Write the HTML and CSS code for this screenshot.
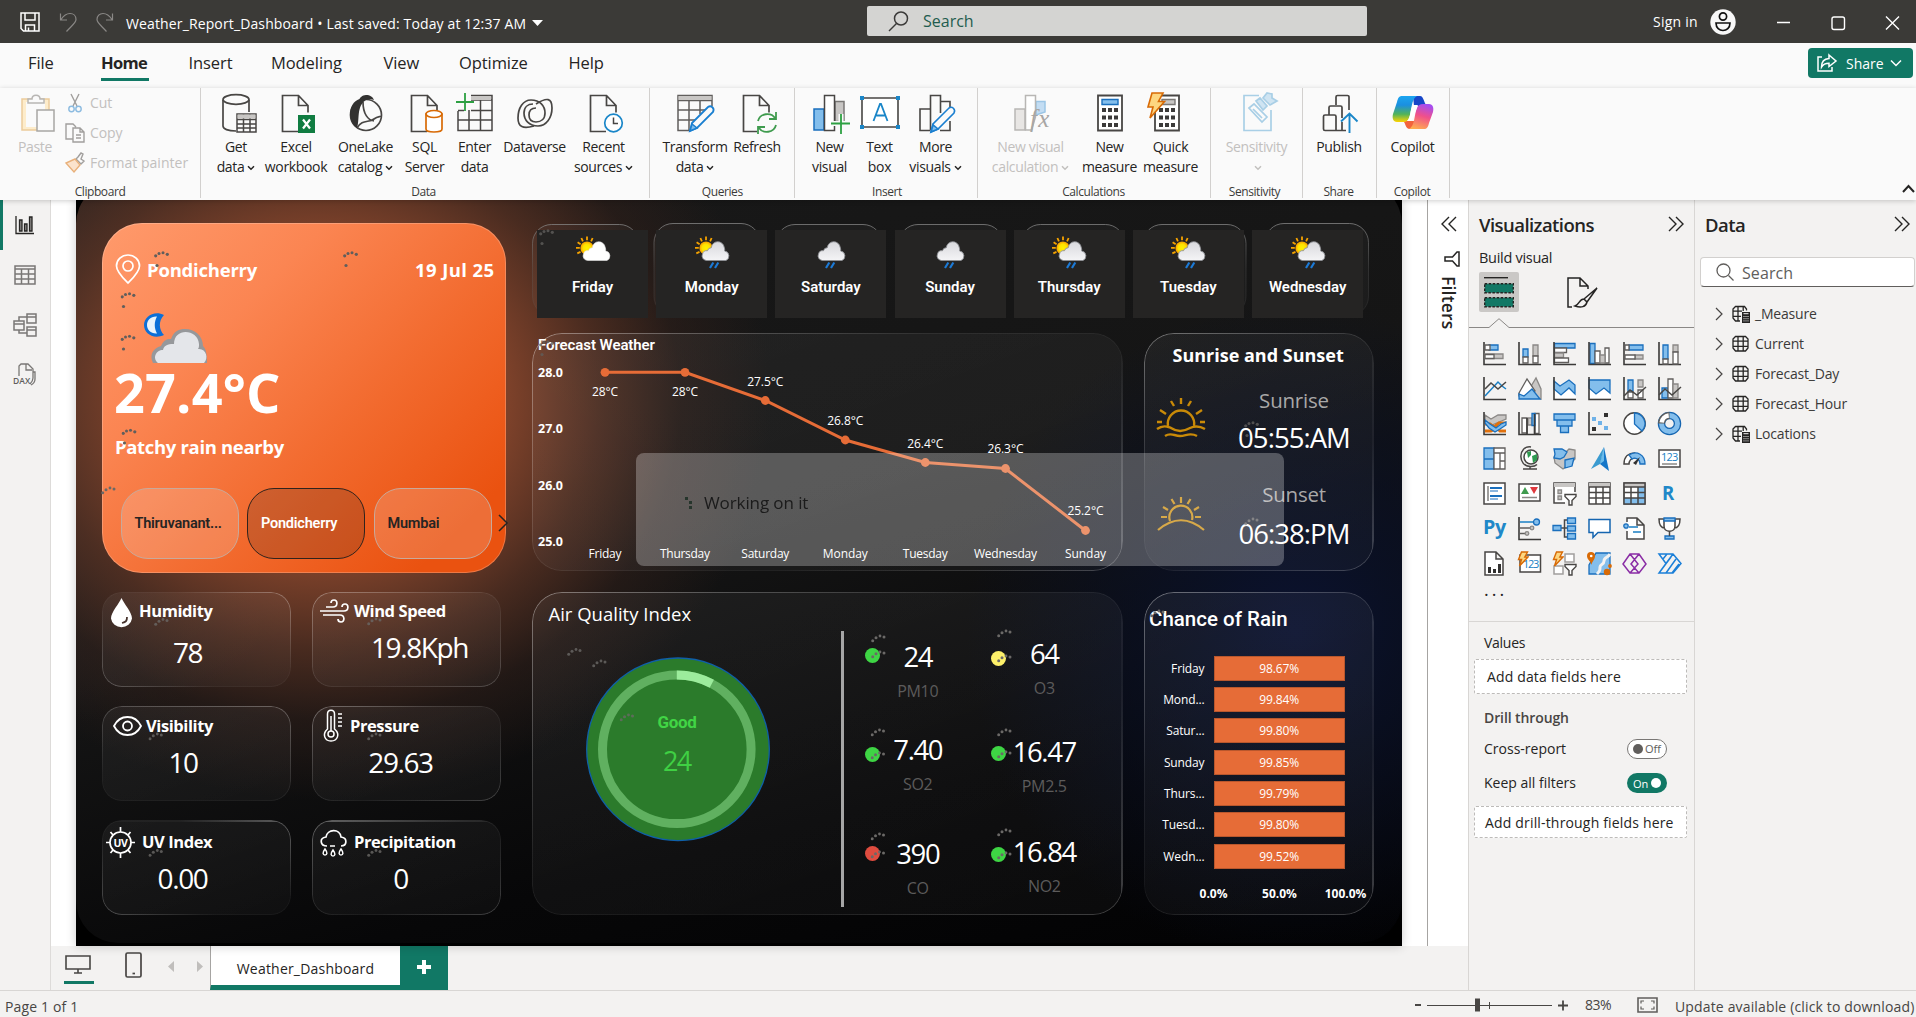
FILE: index.html
```html
<!DOCTYPE html>
<html lang="en">
<head>
<meta charset="utf-8">
<title>Weather_Report_Dashboard</title>
<link rel="stylesheet" href="styles.css">
</head>
<body>
<svg class="sprite" width="0" height="0" aria-hidden="true">
  <defs>
    <linearGradient id="cloudFill" x1="0" y1="0" x2="0" y2="1"><stop offset="0" stop-color="#d9d9dd"/><stop offset="1" stop-color="#f4f4f6"/></linearGradient>
    <radialGradient id="sunFill"><stop offset="0" stop-color="#fff200"/><stop offset=".6" stop-color="#ffe000"/><stop offset="1" stop-color="#f79a00"/></radialGradient>
  </defs>
  <symbol id="sun" viewBox="0 0 36 36"><circle cx="12" cy="13" r="6.600" fill="url(#sunFill)"/><path d="M12 1.500v3.800M6.400 3l1.500 3.300M2.600 7.300l3 1.900M1 12.800h3.800M2.300 18.400l3.200-1.500M17.600 3l-1.500 3.300" stroke="#f5a300" stroke-width="1.800" fill="none"/></symbol>
  <symbol id="cloud" viewBox="0 0 36 36"><path d="M11 25.500a4.600 4.600 0 0 1-4-6.500 4.500 4.500 0 0 1 5-3.300 4 4 0 0 1 3.800-3 6.500 6.500 0 0 1 12.900-.5 6.500 6.500 0 0 1 .4 3.800 5 5 0 0 1 1.400 9.500z" transform="translate(1.500 0)"/></symbol>
  <symbol id="rain" viewBox="0 0 36 36"><path d="M19.300 27.500l-3.300 5.500M24.300 27.500l-3.300 5.500" stroke="#1c7ad6" stroke-width="2.200" fill="none"/></symbol>
  <symbol id="spinA" viewBox="0 0 18 18"><g fill="#605e5c"><circle cx="1.700" cy="4.800" r="1.600"/><circle cx="5" cy="2.400" r="1.500"/><circle cx="9" cy="1.700" r="1.500"/><circle cx="13.300" cy="3.300" r="1.600"/><circle cx="3" cy="14.500" r="1.600"/></g></symbol>
  <symbol id="spinB" viewBox="0 0 18 18"><g fill="#6b6967"><circle cx="1.700" cy="6.800" r="1.500"/><circle cx="5" cy="3.800" r="1.500"/><circle cx="9" cy="2" r="1.400"/><circle cx="13" cy="3" r="1.500"/></g></symbol>
  <symbol id="chev" viewBox="0 0 8 6"><path d="M1 1.200l3 3 3-3" fill="none" stroke="currentColor" stroke-width="1.500"/></symbol>
  <symbol id="dbl" viewBox="0 0 16 16"><path d="M1 1l7 7-7 7M8 1l7 7-7 7" fill="none" stroke="#252423" stroke-width="1.400"/></symbol>
  <symbol id="tbl" viewBox="0 0 18 18"><path d="M3.500 1.500h10l2.500 2.500v9l-2.500 3h-10L1 13V4zM1 6.200h15M1 11.400h15M6 1.500V16M11.200 1.500V16" fill="none" stroke="#252423" stroke-width="1.300"/></symbol>
  <symbol id="tblcalc" viewBox="0 0 18 18"><path d="M14.500 5.500V4l-2-2.500h-9L1 4v9l2.500 3H8M1 6.200h9M1 11.400h8M6 1.500V16M11.200 1.500V6" fill="none" stroke="#252423" stroke-width="1.300"/><path d="M10 7h8v11h-8z" fill="#252423"/><path d="M11.500 8.700h5M11.500 11.500h1M13.500 11.500h1M15.500 11.500h1M11.500 13.700h1M13.500 13.700h1M15.500 13.700h1M11.500 15.900h1M13.500 15.900h1M15.500 15.900h1" stroke="#f3f2f1" stroke-width="1"/></symbol>
  <symbol id="doc" viewBox="0 0 36 40"><path d="M20 38.500H4.500V2.500h16l9.500 10v7M20.500 2.500v10H30" fill="none" stroke="currentColor" stroke-width="1.700"/></symbol>
  <symbol id="bolt" viewBox="0 0 12 16"><path d="M4.500 1h6L7.800 6H11L2.500 15 4.600 8.500H1.500z" fill="#fdd680" stroke="#d86a05" stroke-width="1.400"/></symbol>
  <symbol id="funnel" viewBox="0 0 13 13"><path d="M1 1.500h11v2L8 7.500V12H5V7.500l-4-4z" fill="#fff" stroke="#484644" stroke-width="1.400"/></symbol>
</svg>

<header class="titlebar">
  <div class="quick">
    <svg width="20" height="20" viewBox="0 0 20 20" fill="none" stroke="#fff" stroke-width="1.500"><path d="M1 1h18v18H3.500L1 16.500zM5 1v7h10V1M5.500 19v-6h9v6M8.500 19v-3.500"/></svg>
    <svg width="18" height="20" viewBox="0 0 18 20" fill="none" stroke="#8a8886" stroke-width="1.200"><path d="M1.500 1.500v6.500H8M2 7.500C5 3 8 1.500 11 1.500c3.500 0 6 2.500 6 6 0 3-2.500 4.500-9.500 12"/></svg>
    <svg width="18" height="20" viewBox="0 0 18 20" fill="none" stroke="#8a8886" stroke-width="1.200"><path d="M16.500 1.500v6.500H10M16 7.500C13 3 10 1.500 7 1.500c-3.500 0-6 2.500-6 6 0 3 2.500 4.500 9.500 12"/></svg>
  </div>
  <span class="doc-title">Weather_Report_Dashboard • Last saved: Today at 12:37 AM</span>
  <svg class="title-caret" width="11" height="6"><path d="M0 0h11L5.500 6z" fill="#fff"/></svg>
  <div class="top-search">
    <svg width="21" height="21" viewBox="0 0 21 21" fill="none" stroke="#3b3a39" stroke-width="1.500"><circle cx="13" cy="7.500" r="6.500"/><path d="M8.500 12.500L1 20"/></svg>
    <span>Search</span>
  </div>
  <div class="account">
    <span>Sign in</span>
    <svg width="26" height="26" viewBox="0 0 26 26"><circle cx="13" cy="13" r="12.700" fill="#f8f8f8"/><g fill="none" stroke="#111" stroke-width="1.700"><circle cx="13" cy="7.500" r="3.600"/><path d="M6 14h14c0 10-14 10-14 0z"/></g></svg>
  </div>
  <svg class="win" width="124" height="16" viewBox="0 0 124 16" fill="none" stroke="#fff" stroke-width="1.400"><path d="M0 7.500h13M109 1.500l13 13M122 1.500l-13 13"/><rect x="55" y="2" width="12.500" height="12.500" rx="2"/></svg>
</header>

<nav class="tabs">
  <span style="width:26px">File</span><span class="on" style="width:48px">Home</span><span style="width:43px">Insert</span><span style="width:73px">Modeling</span><span style="width:36px">View</span><span style="width:70px">Optimize</span><span style="width:36px">Help</span>
  <button class="share"><svg width="20" height="18" viewBox="0 0 20 18" fill="none" stroke="#fff" stroke-width="1.500"><path d="M5 3H1v14h14v-4"/><path d="M12 1l7 6-7 5.500V9.300C8 9.300 6 10.500 4.500 13 4.500 8 7 4.800 12 4.500z"/></svg><span>Share</span><svg width="12" height="8" viewBox="0 0 12 8"><path d="M1 1.500l5 5 5-5" fill="none" stroke="#fff" stroke-width="1.500"/></svg></button>
</nav>

<section class="ribbon">
  <div class="group clip">
    <div class="items">
      <div class="cmd dim" style="width:56px"><svg viewBox="0 0 36 40"><path d="M3 6h27v31H3z" fill="#fdeccb" stroke="#eccb9c" stroke-width="1.500"/><path d="M7 9h19v25H7z" fill="#fafafa"/><path d="M9 10V6h4c0-5 8-5 8 0h4v4z" fill="#fafafa" stroke="#b8b6b4" stroke-width="1.500"/><path d="M18 17h17v21H18z" fill="#fafafa" stroke="#a8a6a4" stroke-width="1.500"/></svg><b>Paste</b></div>
      <div class="mini dim">
        <span><svg viewBox="0 0 20 20" fill="none" stroke-width="1.400"><path d="M6 1l6 12M14 1L8 13" stroke="#a19f9d"/><circle cx="6.500" cy="16" r="2.700" stroke="#8cbbe0"/><circle cx="13.500" cy="16" r="2.700" stroke="#8cbbe0"/></svg>Cut</span>
        <span><svg viewBox="0 0 20 20" fill="none" stroke="#a19f9d" stroke-width="1.400"><path d="M8 16H1V1h7l3 3M8 5h7l4 4v10H8zM15 5v4h4M11 12h5M11 15h5"/></svg>Copy</span>
        <span class="fp"><svg viewBox="0 0 20 20" fill="none" stroke-width="1.400"><path d="M11 6l5 5 3-3-3-2 2-5-2-1-3 4z" stroke="#a19f9d"/><path d="M10 6L1 10l8 9 6-7z" fill="#fbe3cc" stroke="#e8b07a"/></svg>Format painter</span>
      </div>
    </div>
    <em>Clipboard</em>
  </div>
  <div class="group" style="width:449px;padding-left:4px"><div class="items">
    <div class="cmd" style="width:62px"><svg class="get" viewBox="0 0 36 40" fill="none" stroke="#484644" stroke-width="1.700"><path d="M15 38C7 38 2 36 2 33V7M28 7v12"/><ellipse cx="15" cy="6.500" rx="13" ry="4.800"/><path d="M16 21h19v18H16zM16 26.500h19M16 31h19M16 35h19M22.500 21v18M29 21v18" stroke-width="1.500"/><path d="M16.500 21.500h18v4h-18z" fill="#c8c6c4" stroke="none"/></svg><b>Get<br>data<svg class="cv"><use href="#chev"/></svg></b></div>
    <div class="cmd" style="width:58px"><svg viewBox="0 0 36 40" color="#797775"><use href="#doc" width="36" height="40"/><path d="M20 22h17v18H20z" fill="#107c41"/><path d="M25 26.500l7 9M32 26.500l-7 9" stroke="#fff" stroke-width="2.200"/></svg><b>Excel<br>workbook</b></div>
    <div class="cmd" style="width:81px"><svg viewBox="0 0 36 40"><g fill="none" stroke="#484644" stroke-width="1.700"><circle cx="18" cy="22" r="15.500"/><path d="M15 9c0 12 5 18 11 19M9 35c5-9 12-5 17-9 4-3 6-2 7-3"/></g><path d="M18 2c-4 0-6 3-6.500 4C5.500 8 2 14 2 21c0 6 2.500 11 7 14 3-8-1-22 9-28 3-1 6-1 8 0-1-3-4-5-8-5z" fill="#323130"/></svg><b>OneLake<br>catalog<svg class="cv"><use href="#chev"/></svg></b></div>
    <div class="cmd" style="width:37px"><svg viewBox="0 0 36 40"><use href="#doc" width="36" height="40"/><path d="M19 21v15c0 4 16 4 16 0V21z" fill="#fff" stroke="#d86a05" stroke-width="1.700"/><ellipse cx="27" cy="21" rx="8" ry="3.500" fill="#fff" stroke="#d86a05" stroke-width="1.700"/></svg><b>SQL<br>Server</b></div>
    <div class="cmd" style="width:63px"><svg viewBox="0 0 36 40" fill="none" stroke="#484644" stroke-width="1.500"><path d="M14 2.500h21v35H1V18M1 27h34M14 17.500h21M12 17v20M23.500 7v30M1 17.500h6M14 7h21"/><path d="M14 3h20v4H14z" fill="#c8c6c4" stroke="none"/><path d="M8 0v18M-1 9h18" stroke="#2da042" stroke-width="1.800"/></svg><b>Enter<br>data</b></div>
    <div class="cmd" style="width:57px"><svg viewBox="0 0 36 40" fill="none" stroke="#484644" stroke-width="1.700"><path d="M17 33C6 36 1 34 1 25 1 15 6 7 14 7c9 0 14 6 14 13 0 6-4 9-9 9-5 0-7-3-7-7 0-5 3-7 7-7"/><path d="M19 11C30 4 35 5 35 15c0 10-6 18-14 18-9 0-14-6-14-13 0-6 4-9 9-9"/></svg><b>Dataverse</b></div>
    <div class="cmd" style="width:81px"><svg viewBox="0 0 36 40"><use href="#doc" width="36" height="40"/><circle cx="27.500" cy="30" r="8.800" fill="#fff" stroke="#1a86c8" stroke-width="1.700"/><path d="M27.500 24.500v6h4.500" fill="none" stroke="#484644" stroke-width="1.500"/></svg><b>Recent<br>sources<svg class="cv"><use href="#chev"/></svg></b></div>
  </div><em>Data</em></div>
  <div class="group" style="width:144.500px;padding-left:8px"><div class="items">
    <div class="cmd" style="width:74px"><svg viewBox="0 0 36 40" fill="none" stroke="#605e5c" stroke-width="1.500"><path d="M35 13V2.500H1v35h12M1 7.500h34M1 17h27M1 27h18M12 7v30M23 7v14"/><path d="M1.500 3h33v4h-33z" fill="#c8c6c4" stroke="none"/><path d="M13 38l2-8L31 14c3-2 7 1 5 5L20 35z" fill="#fafafa" stroke="#1a7fd0" stroke-width="1.800"/><path d="M13 38l2-7 5 4z" fill="#83beec" stroke="#1a7fd0"/></svg><b>Transform<br>data<svg class="cv"><use href="#chev"/></svg></b></div>
    <div class="cmd" style="width:50px"><svg viewBox="0 0 36 40"><use href="#doc" width="36" height="40"/><path d="M18 22h20v18H18z" fill="#fafafa"/><g fill="none" stroke="#3f9b4e" stroke-width="1.800"><path d="M19 28c2-8 13-9 17-3M37 19v7h-7M37 32c-2 8-13 9-17 3M19 41v-7h7"/></g></svg><b>Refresh</b></div>
  </div><em>Queries</em></div>
  <div class="group" style="width:183px;padding-left:10px"><div class="items">
    <div class="cmd" style="width:50px"><svg viewBox="0 0 36 40" stroke="#484644" stroke-width="1.500"><path d="M2 16h10v21H2z" fill="#83beec" stroke="#1a6fbd"/><path d="M23 8.500h9v20h-9z" fill="#c8c6c4" stroke="#797775"/><path d="M12.500 2.500h10v35h-10z" fill="#fff"/><path d="M29 21v20M19 30.500h19" stroke="#fafafa" stroke-width="5"/><path d="M29 21v20M19 30.500h19" stroke="#2da042" stroke-width="1.800"/></svg><b>New<br>visual</b></div>
    <div class="cmd" style="width:50px"><svg class="over" viewBox="0 0 40 40"><path d="M2 5h36v29H2z" fill="#fff" stroke="#484644" stroke-width="1.600"/><g fill="#1a86c8"><path d="M0 3h4v4H0zM36 3h4v4h-4zM0 32h4v4H0zM36 32h4v4h-4z"/></g><path d="M13.500 28L20 11h1l6.500 17M15.500 22.500h10" fill="none" stroke="#1a86c8" stroke-width="1.800"/></svg><b>Text<br>box</b></div>
    <div class="cmd" style="width:62px"><svg viewBox="0 0 36 40" fill="none" stroke="#484644" stroke-width="1.600"><path d="M12 37.500H2V16h10M12.500 37.500v-35h10V20M23 8.500h9V14M32 28v9.500H22"/><path d="M13 39l2-8L31 15c3-2 7 1 5 5L20 36z" fill="#fafafa" stroke="#1a7fd0"/><path d="M13 39l2-7 5 4z" fill="#83beec" stroke="#1a7fd0"/></svg><b>More<br>visuals<svg class="cv"><use href="#chev"/></svg></b></div>
  </div><em>Insert</em></div>
  <div class="group" style="width:233px;padding-left:7px"><div class="items">
    <div class="cmd dim" style="width:92px"><svg viewBox="0 0 36 40" fill="none" stroke="#b8b6b4" stroke-width="1.500"><path d="M2 16h10v21H2z" fill="#e8e6e4"/><path d="M23 8.500h9V19l-9 3z" fill="#c3ddf3" stroke="#9cc6e6"/><path d="M12.500 2.500h10V24l-4 13h-6z" fill="#fff"/><text x="17" y="34" font-size="25" font-style="italic" font-family="Liberation Serif" fill="#a8a6a4" stroke="none" textLength="19">fx</text></svg><b>New visual<br>calculation<svg class="cv"><use href="#chev"/></svg></b></div>
    <div class="cmd" style="width:66px"><svg viewBox="0 0 36 40"><path d="M6 2.500h24v35H6z" fill="#fff" stroke="#484644" stroke-width="1.800"/><path d="M10 6.500h16v5H10z" fill="#83beec" stroke="#1a6fbd" stroke-width="1.400"/><path d="M10 17h16M10 24.500h16M10 32h16" stroke="#3b3a39" stroke-width="4" stroke-dasharray="4 2"/></svg><b>New<br>measure</b></div>
    <div class="cmd" style="width:56px"><svg class="quick-m" viewBox="0 0 36 40"><path d="M6 2.500h24v35H6z" fill="#fff" stroke="#484644" stroke-width="1.800"/><path d="M13 6.500h13v5H13z" fill="#c8c6c4" stroke="#797775" stroke-width="1.400"/><path d="M10 17h16M10 24.500h16M10 32h16" stroke="#3b3a39" stroke-width="4" stroke-dasharray="4 2"/><path d="M3 0h11L9.500 8.500h6L1 25l3-11H-1z" fill="#fdd680" stroke="#d86a05" stroke-width="1.600"/></svg><b>Quick<br>measure</b></div>
  </div><em>Calculations</em></div>
  <div class="group" style="width:92px;padding-left:4px"><div class="items">
    <div class="cmd dim" style="width:84px"><svg viewBox="0 0 36 40" fill="none" stroke="#a9cfe6" stroke-width="1.700"><path d="M20 2.500H5v35h27V17"/><path d="M10 15l5-4 13 13-5 5zM14 16l9 9"/><path d="M17 8l7 9 4-4-7-8zM24 5l7 7 7-4-5-3V1l-5-1z" fill="#cfe4f2"/></svg><b>Sensitivity<br><svg class="cv"><use href="#chev"/></svg></b></div>
  </div><em>Sensitivity</em></div>
  <div class="group" style="width:74px;padding-left:6px"><div class="items">
    <div class="cmd" style="width:61px"><svg viewBox="0 0 36 40" fill="none" stroke="#484644" stroke-width="1.700"><path d="M15 12V4a1.500 1.500 0 0 1 1.500-1.500h10A1.500 1.500 0 0 1 28 4v13M8 22v-7.500A1.500 1.500 0 0 1 9.500 13h10a1.500 1.500 0 0 1 1.500 1.500V25M21 29v8.500M25 37.500H4A1.500 1.500 0 0 1 2.500 36V23.500A1.500 1.500 0 0 1 4 22h9.500a1.500 1.500 0 0 1 1.500 1.500v14"/><path d="M28.500 40V21M20 28.500l8.500-8 8 8" stroke="#1a86c8" stroke-width="1.900"/></svg><b>Publish</b></div>
  </div><em>Share</em></div>
  <div class="group" style="width:73px;padding-left:6px"><div class="items">
    <div class="cmd" style="width:60px"><svg class="over" viewBox="0 0 40 40"><defs><linearGradient id="ga" x1="0" y1="0" x2="0" y2="1"><stop offset="0" stop-color="#1ba5f0"/><stop offset=".35" stop-color="#1b8fe0"/><stop offset=".7" stop-color="#52b35a"/><stop offset="1" stop-color="#ffd400"/></linearGradient><linearGradient id="gb" x1=".6" y1="0" x2=".3" y2="1"><stop offset="0" stop-color="#a64df0"/><stop offset=".45" stop-color="#f0508a"/><stop offset="1" stop-color="#ffad50"/></linearGradient></defs><path d="M20 3h7c4 0 4 8 7 10h-13z" fill="#1746c8"/><path d="M10 28h13l-3 8h-3c-5 0-4-6-7-8z" fill="#f2643c"/><path d="M9 3h15c-6 3-5 14-8 22-1 3-3 4-6 4H4c-4 0-5-4-4-8L4 9c1-4 2-6 5-6z" fill="url(#ga)"/><path d="M31 36H16c6-3 5-14 8-21 1-3 3-4 6-4h6c4 0 5 4 4 8l-4 11c-1 4-2 6-5 6z" fill="url(#gb)"/><path d="M20 12h5c-2 3-4 15-8 16h-3c4-3 3-12 6-16z" fill="#fff"/></svg><b>Copilot</b></div>
  </div><em>Copilot</em></div>
  <svg class="collapse" width="13" height="9" viewBox="0 0 13 9"><path d="M1 8l5.500-6L12 8" fill="none" stroke="#252423" stroke-width="2"/></svg>
</section>

<main class="work">
  <aside class="rail">
    <i class="on"><svg width="20" height="20" viewBox="0 0 20 20" fill="none" stroke="#252423" stroke-width="1.300"><path d="M1 1v17.500h18"/><path d="M4.500 5h2.500v11H4.500zM9.500 9H12v7H9.500zM14.500 2H17v14h-2.500z" fill="#8a8886"/></svg></i>
    <i><svg width="22" height="20" viewBox="0 0 22 20" fill="none" stroke="#797775" stroke-width="1.500"><path d="M1 1h20v18H1zM1 4h20M1 9h20M1 14h20M7.500 4v15M14.500 4v15"/></svg></i>
    <i><svg width="24" height="24" viewBox="0 0 24 24" fill="none" stroke="#797775" stroke-width="1.500"><path d="M1 8h10v9H1zM14 1h9v9h-9zM14 14h9v9h-9zM1 11h10M14 4h9M14 17h9M6 8V4h8M6 17v3h8"/></svg></i>
    <i><svg width="24" height="24" viewBox="0 0 24 24" fill="none" stroke="#797775" stroke-width="1.300"><path d="M6 13V3l2-2h7l5 5v9c0 3-1 4-3 6M13 1v6h6M20 9h2v7c0 3-2 5-4 6"/><text x="0" y="21" font-size="8.500" font-family="Open Sans" fill="#605e5c" stroke="none" font-weight="600" textLength="17">DAX</text></svg></i>
  </aside>

  <div class="center">
    <div class="stage">
      <div class="report">
        <div class="sheet"></div>
        <div class="left">
          <section class="now">
            <div class="place"><svg width="26" height="31" viewBox="0 0 26 31" fill="none" stroke="#fff" stroke-width="1.700"><path d="M13 29C8 24 1.500 18 1.500 12a11.500 11 0 0 1 23 0C24.500 18 18 24 13 29z"/><circle cx="13" cy="12" r="5"/></svg><strong>Pondicherry</strong><strong class="date">19 Jul 25</strong></div>
            <svg class="moon" width="66" height="54" viewBox="0 0 66 54"><path d="M22 4C12-1 2 6 2 14s9 15 20 10c-5-5-6-14 0-20z" fill="#0b6fd8"/><path d="M15 5.500C9 5 5 9 5 14s4 9 10 8.500C12 17 12 11 15 5.500z" fill="#e9f3fb"/><path d="M11 52c-4-8 0-15 8-17 3-7 7-7 10-7 3-8 8-10 14-10 10 0 18 7 18 17 3 3 4 7 4 17z" fill="#96989b"/><path d="M16 52c-6-5-2-13 5-13 1-6 8-6 11-6 0-17 24-15 25 0 0 2 0 4-1 5 8-1 11 9 6 14z" fill="#e4e6ea"/></svg>
            <div class="temp">27.4°C</div>
            <div class="cond">Patchy rain nearby</div>
            <div class="cities"><span>Thiruvanant...</span><span class="sel">Pondicherry</span><span>Mumbai</span><svg width="10" height="18" viewBox="0 0 10 18"><path d="M1 1l8 8-8 8" fill="none" stroke="#252423" stroke-width="1.500"/></svg></div>
          </section>
          <div class="stats">
            <section class="card stat e1"><h4><svg style="margin:4px 6px 0 8px" width="23" height="31" viewBox="0 0 23 31"><path d="M11.500 0C14 6 22 14 22 20.500a10.600 10 0 0 1-21 0C1 14 9 6 11.500 0z" fill="#fff"/><path d="M17 19c0 4-1 5-5 6" fill="none" stroke="#46332c" stroke-width="1.800"/></svg>Humidity</h4><p style="padding-right:18px">78</p></section>
            <section class="card stat e2"><h4><svg style="margin:7px 5px 6px 8px" width="29" height="25" viewBox="0 0 29 25" fill="none" stroke="#fff" stroke-width="1.700"><path d="M0 12h24c5 0 5-7 1-7-2 0-3 1-3 3M6 8h7c5 0 5-7 1-7-2 0-3 1-3 3M3 16h17c5 0 5 7 1 7-2 0-3-1-3-3"/></svg>Wind Speed</h4><p style="padding-left:26px;margin-top:-3px">19.8Kph</p></section>
            <section class="card stat mid-row e3"><h4><svg style="margin:0 4px 0 11px" width="29" height="20" viewBox="0 0 29 20" fill="none" stroke="#fff" stroke-width="1.800"><path d="M1 10C7-2 22-2 28 10 22 22 7 22 1 10z"/><circle cx="14.500" cy="10" r="4.500"/></svg>Visibility</h4><p style="padding-right:27px">10</p></section>
            <section class="card stat mid-row e4"><h4><svg style="margin:-2px 6px 0 11px" width="21" height="33" viewBox="0 0 21 33" fill="none" stroke="#fff" stroke-width="1.500"><path d="M4.500 20V5c0-5 7-5 7 0v15c6 5 3 12-3.500 12S-1 25 4.500 20zM8 7v15M15 5h4M15 9h4M15 13h4M15 17h4"/><circle cx="8" cy="25" r="3"/></svg>Pressure</h4><p style="padding-right:12px">29.63</p></section>
            <section class="card stat low-row e2b"><h4><svg style="margin:2px 7px 0 4px" width="29" height="31" viewBox="0 0 29 31" fill="none" stroke="#fff" stroke-width="1.700"><circle cx="14.500" cy="15.500" r="10.500"/><path d="M14.500 0v5M14.500 26v5M0 15.500h4M25 15.500h4M4.500 5l2.500 3M24.500 5L22 8M4.500 26L7 23M24.500 26L22 23"/><text x="14.500" y="19.500" text-anchor="middle" font-size="10.500" font-weight="700" font-family="Open Sans" fill="#fff" stroke="none">UV</text></svg>UV Index</h4><p style="padding-right:28px">0.00</p></section>
            <section class="card stat low-row e4"><h4><svg style="margin:2px 7px 0 8px" width="27" height="28" viewBox="0 0 27 28" fill="none" stroke="#fff" stroke-width="1.700"><path d="M7 17C0 17-1 9 6 8c1-8 14-9 15 0 7 1 6 9 0 9M10 17h5"/><path d="M5 20c-3 4-2 6 0 6s3-2 0-6zM13 21c-3 4-2 6 0 6s3-2 0-6zM21 20c-3 4-2 6 0 6s3-2 0-6z" stroke-width="1.500"/></svg>Precipitation</h4><p style="padding-right:12px">0</p></section>
          </div>
        </div>

        <div class="right">
          <svg class="slots" width="842" height="98" viewBox="0 0 842 98" fill="#ffffff08" stroke="url(#slotEdge)"><defs><linearGradient id="slotEdge" gradientUnits="userSpaceOnUse" x1="0" y1="0" x2="0" y2="92"><stop offset="0" stop-color="#8a8a8a" stop-opacity=".75"/><stop offset=".5" stop-color="#6a6a6a" stop-opacity=".3"/><stop offset="1" stop-color="#6a6a6a" stop-opacity=".15"/></linearGradient></defs><rect x=".5" y="1.500" width="106" height="91" rx="19"/><rect x="122" y=".5" width="106" height="92" rx="19"/><rect x="244" y="1.500" width="106" height="91" rx="19"/><rect x="367" y="1.500" width="104" height="91" rx="19"/><rect x="489.500" y="1.500" width="103" height="91" rx="19"/><rect x="611" y="1.500" width="103" height="91" rx="19"/><rect x="733" y=".5" width="103.500" height="92" rx="19"/></svg>
          <div class="days">
            <div><svg><use href="#sun"/><use href="#cloud" fill="#fff" stroke="#e3e3e3" stroke-width=".6"/></svg>Friday</div>
            <div><svg><use href="#sun"/><use href="#cloud" fill="url(#cloudFill)" stroke="#8f9195" stroke-width=".9"/><use href="#rain"/></svg>Monday</div>
            <div><svg class="nosun"><use href="#cloud" fill="url(#cloudFill)" stroke="#8f9195" stroke-width=".9"/><use href="#rain"/></svg>Saturday</div>
            <div><svg class="nosun"><use href="#cloud" fill="url(#cloudFill)" stroke="#8f9195" stroke-width=".9"/><use href="#rain"/></svg>Sunday</div>
            <div><svg><use href="#sun"/><use href="#cloud" fill="url(#cloudFill)" stroke="#8f9195" stroke-width=".9"/><use href="#rain"/></svg>Thursday</div>
            <div><svg><use href="#sun"/><use href="#cloud" fill="url(#cloudFill)" stroke="#8f9195" stroke-width=".9"/><use href="#rain"/></svg>Tuesday</div>
            <div><svg><use href="#sun"/><use href="#cloud" fill="url(#cloudFill)" stroke="#8f9195" stroke-width=".9"/><use href="#rain"/></svg>Wednesday</div>
          </div>

          <section class="card forecast e5">
            <svg width="591" height="238" viewBox="0 0 591 238">
              <text class="din" x="6" y="16.500" font-size="15" textLength="117">Forecast Weather</text>
              <g class="ytick"><text x="6" y="44" textLength="25">28.0</text><text x="6" y="100" textLength="25">27.0</text><text x="6" y="157" textLength="25">26.0</text><text x="6" y="213" textLength="25">25.0</text></g>
              <path d="M73 39.300h80l80.300 28.200 80 39.500 80 22.500 80 6 80 62" fill="none" stroke="#e66c37" stroke-width="3"/>
              <g fill="#e66c37"><circle cx="73" cy="39.300" r="4.400"/><circle cx="153" cy="39.300" r="4.400"/><circle cx="233.300" cy="67.500" r="4.400"/><circle cx="313.300" cy="107" r="4.400"/><circle cx="393.300" cy="129.500" r="4.400"/><circle cx="473.500" cy="135.500" r="4.400"/><circle cx="553.500" cy="197.500" r="4.400"/></g>
              <g class="lbl"><text x="73" y="63" textLength="26">28°C</text><text x="153" y="63" textLength="26">28°C</text><text x="233.300" y="52.500" textLength="36">27.5°C</text><text x="313.300" y="92" textLength="36">26.8°C</text><text x="393.300" y="115" textLength="36">26.4°C</text><text x="473.500" y="120" textLength="36">26.3°C</text><text x="553.500" y="182" textLength="36">25.2°C</text>
              <text x="73" y="225" textLength="33">Friday</text><text x="153" y="225" textLength="50">Thursday</text><text x="233.300" y="225" textLength="48">Saturday</text><text x="313.300" y="225" textLength="45">Monday</text><text x="393.300" y="225" textLength="45">Tuesday</text><text x="473.500" y="225" textLength="63">Wednesday</text><text x="553.500" y="225" textLength="41">Sunday</text></g>
            </svg>
          </section>

          <section class="card sun e5">
            <h3>Sunrise and Sunset</h3>
            <div class="row"><svg width="50" height="42" viewBox="0 0 50 42" fill="none" stroke="#c98a08" stroke-width="2.400"><path d="M12 29a13.200 13.200 0 1 1 26 0M1 32c7-5 11-2 14-1 6 4 12 4 19 0 4-2 8-3 15 1M9 39c6-4 9 0 15 0s10-4 17 0"/><path d="M25 1v6M15 4l3 5M35 4l-3 5M4 13l6 4M46 13l-6 4M1 25h5M44 25h5"/></svg><div><span>Sunrise</span><b>05:55:AM</b></div></div>
            <div class="row second"><svg width="50" height="42" viewBox="0 0 50 42" fill="none" stroke="#c98a08" stroke-width="2.200"><path d="M14 26a11.500 11.500 0 1 1 22-1M2 35c15-13 31-13 46 0"/><path d="M25 2v6M15.500 4l3 5M34.500 4l-3 5M7 12l5 3M43 12l-5 3M5 22h6M39 22h6"/></svg><div><span>Sunset</span><b>06:38:PM</b></div></div>
          </section>

          <section class="card aqi e5">
            <h3>Air Quality Index</h3>
            <div class="aqi-body">
              <svg class="gauge" width="186" height="188" viewBox="0 0 186 188"><circle cx="93" cy="93.300" r="91.300" fill="#2b7b2b" stroke="#0f5fa8" stroke-width="1.300"/><circle cx="91.800" cy="93.300" r="74.300" fill="none" stroke="#60b060" stroke-width="9"/><path d="M91.800 19a74.300 74.300 0 0 1 35 8.800" fill="none" stroke="#9cec9c" stroke-width="9"/><text x="92" y="71.500" text-anchor="middle" font-family="Roboto" font-weight="700" font-size="17" fill="#41d545" textLength="39">Good</text><text x="92.500" y="115" text-anchor="middle" font-family="Open Sans" font-size="27" fill="#3fd043" textLength="29">24</text></svg>
              <div class="rule"></div>
              <div class="metrics">
                <div class="metric" style="--d:10px"><i></i><b>24</b><span>PM10</span></div>
                <div class="metric" style="--d:16.500px;margin-top:25px"><i></i><b>7.40</b><span>SO2</span></div>
                <div class="metric" style="--d:11.500px;margin-top:36px"><i class="bad"></i><b>390</b><span>CO</span></div>
              </div>
              <div class="metrics second">
                <div class="metric" style="--d:16.500px"><i class="mid"></i><b>64</b><span>O3</span></div>
                <div class="metric" style="--d:13.500px;margin-top:30px"><i></i><b>16.47</b><span>PM2.5</span></div>
                <div class="metric" style="--d:14.500px;margin-top:32px"><i></i><b>16.84</b><span>NO2</span></div>
              </div>
            </div>
          </section>

          <section class="card chance e5">
            <h3>Chance of Rain</h3>
            <div class="bars">
              <span>Friday</span><b>98.67%</b><span>Mond...</span><b>99.84%</b><span>Satur...</span><b>99.80%</b><span>Sunday</span><b>99.85%</b><span>Thurs...</span><b>99.79%</b><span>Tuesd...</span><b>99.80%</b><span>Wedn...</span><b>99.52%</b>
            </div>
            <div class="axis"><span>0.0%</span><span>50.0%</span><span>100.0%</span></div>
          </section>
        </div>

        <svg class="loading" viewBox="76 200 1326 746">
          <g><use href="#spinA" x="154" y="251" width="18" height="18"/><use href="#spinA" x="343" y="251" width="18" height="18"/><use href="#spinA" x="120.500" y="292" width="18" height="18"/><use href="#spinA" x="120.500" y="334.500" width="18" height="18"/><use href="#spinA" x="121.500" y="428.500" width="18" height="18"/><use href="#spinB" x="101" y="486" width="18" height="18"/></g>
          <g opacity=".8"><use href="#spinA" x="539" y="229" width="18" height="18"/><use href="#spinA" x="539" y="340" width="18" height="18"/><use href="#spinA" x="1244" y="421" width="18" height="18"/><use href="#spinB" x="1244" y="517" width="18" height="18"/>
          <use href="#spinB" x="154" y="617.500" width="18" height="18"/><use href="#spinB" x="367" y="617" width="18" height="18"/><use href="#spinB" x="148.300" y="732" width="18" height="18"/><use href="#spinB" x="367" y="732" width="18" height="18"/><use href="#spinB" x="148.300" y="848.500" width="18" height="18"/><use href="#spinB" x="367" y="848.500" width="18" height="18"/>
          <use href="#spinB" x="567" y="647.500" width="18" height="18"/><use href="#spinB" x="592" y="659" width="18" height="18"/><use href="#spinB" x="619.500" y="713" width="18" height="18"/></g>
          <g><use href="#spinB" x="871" y="634" width="18" height="18"/><use href="#spinB" x="871" y="650" width="18" height="18"/><use href="#spinB" x="870.500" y="728" width="18" height="18"/><use href="#spinB" x="870.500" y="751" width="18" height="18"/><use href="#spinB" x="870.500" y="832" width="18" height="18"/><use href="#spinB" x="870.500" y="850" width="18" height="18"/>
          <use href="#spinB" x="997" y="629" width="18" height="18"/><use href="#spinB" x="997" y="654" width="18" height="18"/><use href="#spinB" x="997" y="728" width="18" height="18"/><use href="#spinB" x="997" y="750" width="18" height="18"/><use href="#spinB" x="997" y="828" width="18" height="18"/><use href="#spinB" x="997" y="851" width="18" height="18"/><use href="#spinB" x="1150" y="609" width="18" height="18"/></g>
        </svg>
        <div class="toast"><svg width="9" height="14"><path d="M0 1h3v3H0zM4 5h3v3H4zM4 10h3v3H4z" fill="#26352c"/></svg>Working on it</div>
      </div>
      <aside class="filters">
        <svg width="16" height="16" style="transform:scaleX(-1)"><use href="#dbl"/></svg>
        <svg class="fi" width="16" height="16" viewBox="0 0 16 16" fill="none" stroke="#252423" stroke-width="1.500"><path d="M15 1v14h-2L8.500 10H1V6h7.500L13 1z"/></svg>
        <span>Filters</span>
      </aside>
    </div>
    <div class="pages">
      <i class="desk"><svg width="26" height="19" viewBox="0 0 26 19" fill="none" stroke="#484644" stroke-width="1.600"><path d="M1 1h24v13H1zM13 14v4M9 18h8"/></svg></i>
      <svg class="phone" width="18" height="26" viewBox="0 0 18 26" fill="none" stroke="#484644" stroke-width="1.700"><rect x="1" y="1" width="15" height="24" rx="1.500"/><path d="M7.500 21.500h2.500"/></svg>
      <svg class="nav" width="36" height="11"><path d="M6 0v11L0 5.500zM29 0v11l6-5.500z" fill="#c0bebc"/></svg>
      <span class="page">Weather_Dashboard</span>
      <span class="add"><svg width="14" height="14"><path d="M7 0v14M0 7h14" stroke="#fff" stroke-width="4"/></svg></span>
    </div>
  </div>

  <aside class="viz">
    <header><h2>Visualizations</h2><svg width="16" height="16"><use href="#dbl"/></svg></header>
    <h5>Build visual</h5>
    <div class="modes">
      <i><svg width="30" height="30" viewBox="0 0 30 30"><path d="M0 .7h24" stroke="#252423" stroke-width="1.400"/><path d="M.7 6.700h28.600v9H.7zM.7 20.700h28.600v9H.7z" fill="#117865" stroke="#252423" stroke-width="1.400" stroke-dasharray="2.500 1.500"/></svg></i>
      <svg width="31" height="31" viewBox="0 0 31 31" fill="none" stroke="#252423" stroke-width="1.500"><path d="M5 30H1V1h12l8 8v3M13 1v8h8"/><path d="M30 11L17 22l3 3zM17 22c-5 0-4 5-9 7 6 2 11 1 12-4"/></svg>
    </div>
    <svg class="split" width="225" height="10" viewBox="0 0 225 10"><path d="M0 9.500h20L30 .7l10 8.800h185" fill="none" stroke="#8a8886"/></svg>
    <div class="gallery">
      <svg><path class="k" d="M1 0v22.500h22"/><path class="g" d="M2 12h18v4.500H2z"/><path class="b" d="M6 3h9v5H6z"/><path class="w" d="M2 3h5v5H2zM2 12.500h9v4H2z"/></svg>
      <svg><path class="k" d="M1 0v22.500h22"/><path class="b" d="M5 7h5v8H5z"/><path class="g" d="M15 3h5v11h-5z"/><path class="w" d="M5 15h5v6H5zM15 14h5v7h-5z"/></svg>
      <svg><path class="b" d="M1.500 1.500h20.500v4.500H1.500z"/><path class="w" d="M1.500 6h12v4.500h-12z"/><path class="g" d="M1.500 11h9v4.500h-9z"/><path class="w" d="M1.500 16h14v4.500h-14z"/><path class="k" d="M1 0v22.500h22"/></svg>
      <svg><path class="b" d="M2 1.500h5v20H2z"/><path class="w" d="M7 9h5v12H7zM17 6h4v15h-4z"/><path class="g" d="M12 13h5v8h-5z"/><path class="k" d="M1 0v22.500h22"/></svg>
      <svg><path class="k" d="M1 0v22.500h22"/><path class="b" d="M6 3h14v5H6z"/><path class="g" d="M12 13h8v4h-8z"/><path class="w" d="M2 3h4v5H2zM2 13h10v4H2z"/></svg>
      <svg><path class="k" d="M1 0v22.500h22"/><path class="b" d="M5 3h5v14H5z"/><path class="g" d="M15 3h5v7h-5z"/><path class="w" d="M5 17h5v5H5zM15 10h5v12h-5z"/></svg>

      <svg><path class="k" d="M1 0v22.500h22"/><path class="bs" d="M2 19l13-14 4 4 4 3"/><path class="k1" d="M2 12l6-6 7 6 8-7"/></svg>
      <svg><path class="g" d="M9 16l9-15 5 11v10z"/><path class="w" d="M1 16L9 2l8 12-6 6-10-1z"/><path class="b" d="M1 22v-5l5 2 8-7 8 10z"/></svg>
      <svg><path class="w" d="M1 8h22v13H1z" style="stroke:none"/><path class="b" d="M1 4l6 5 9-6 6 5v9l-6-6-8 7-7-6z"/><path class="k" d="M1 0v22.500h22"/></svg>
      <svg><path d="M1 8h22v13H1z" fill="#fff"/><path class="b" d="M1 3h21v13l-6-5-8 6-7-6z"/><path class="k" d="M1 0v22.500h22"/></svg>
      <svg><path class="k" d="M1 0v22.500h22"/><path class="b" d="M5 3h5v11H5z"/><path class="g" d="M15 3h5v7h-5z"/><path class="w" d="M5 15h5v6H5zM15 13h5v8h-5z"/><path class="k1" d="M1 19l6-6 7 5 9-8"/></svg>
      <svg><path class="k" d="M1 0v22.500h22"/><path class="b" d="M4 11h6v10H4z"/><path class="w" d="M10 2h5v19h-5z"/><path class="g" d="M15 7h5v14h-5z"/><path class="k1" d="M1 18l6-6 7 6 9-8"/></svg>

      <svg><path class="g" d="M2 3l6 4 7-4 8 0v4l-7 3-7 3-7-4z"/><path d="M2 12h5l4 3 5-4h7M2 19h6l6-3 3 3h6" fill="none" stroke="#e0700c" stroke-width="3"/><path class="b" d="M2 8l5 4 6 4 5-4 5-2v3l-6 4-5 3-6-4-4-5z"/><path class="k" d="M1 0v22.500h22"/></svg>
      <svg><path class="w" d="M4 6h5v15H4zM17 1.500h4v20h-4z"/><path class="g" d="M10 6h4v7h-4z"/><path class="b" d="M14 1.500h3v12h-3z"/><path class="k" d="M1 0v22.500h22M9 6v16M16.500 2v20"/></svg>
      <svg><path class="b" d="M1 2h21v6H1zM4 8h15v6H4zM7.500 14h8v6.500h-8z"/></svg>
      <svg><path class="k" d="M1 0v22.500h22"/><path d="M16 1h4v4h-4zM4 15h4v4H4z" fill="#323130"/><path d="M4 5h4v4H4zM10 9h4v4h-4zM16 14h4v4h-4z" fill="#6fb2e8"/></svg>
      <svg><circle class="w k1" cx="11.500" cy="11.500" r="10.700"/><path class="b" d="M11.500 1a10.700 10.700 0 0 1 7.500 18L11.500 12z"/></svg>
      <svg><circle cx="11.500" cy="11.500" r="8" fill="none" stroke="#1565b0" stroke-width="7.500"/><circle cx="11.500" cy="11.500" r="8" fill="none" stroke="#83beec" stroke-width="5"/><path d="M3.500 11.500a8 8 0 0 1 8-8" fill="none" stroke="#605e5c" stroke-width="7"/><path d="M3.700 10.500a8 8 0 0 1 7-7" fill="none" stroke="#fff" stroke-width="4.500"/></svg>

      <svg><path class="b" d="M1 1h10v21H1zM1 12h10"/><path class="w" d="M11 1h11v5H11zM11 6h6v16h-6zM17 6h5v8h-5zM17 14h5v8h-5z"/></svg>
      <svg><circle cx="13" cy="10" r="7" fill="#fff" stroke="#484644" stroke-width="1.500"/><path d="M9 5l4-1v4l-3 3zM14 9l5-2v6l-4 3z" fill="#2f9a50"/><path class="k1" d="M13 0C0-2-1 20 13 19.500c3 0 5-1 6-2M12 20v2M5 22h14"/></svg>
      <svg><path class="g" d="M1 10l11-4 4-4 6 1v9l-4 4-8 6-8-6z"/><path class="b" d="M1 2h8l5 3-3 5-4 2-6-1 1-4zM12 13l9-2-2 8-7 2z"/></svg>
      <svg><path d="M16 0L3 22l9-5z" fill="#3a9bd0"/><path d="M16 0l5 24-9-7z" fill="#1576c8"/><path d="M16 0l-4 17 4-3z" fill="#6bbcea"/></svg>
      <svg><path class="w k1" d="M1 17C1 9 6 6 11.500 6v5C8 11 6 14 6 17z"/><path class="b" d="M6 8c8-5 16 0 16 9h-5c0-5-5-7-8-5z"/><path d="M10 16l7-6-4 8z" fill="#323130"/></svg>
      <svg><path class="w k1" d="M1 3h21v17H1z"/><text x="11.500" y="14" text-anchor="middle" font-size="11" fill="#1a7fc4" font-family="Open Sans" textLength="17">123</text><path d="M4 17h15" stroke="#8a8886" stroke-width="1.500"/></svg>

      <svg><path class="w k1" d="M1 1h21v21H1z"/><path d="M5 4v15" stroke="#605e5c" stroke-width="1.200"/><path d="M7 6h12M7 14h12" stroke="#1a6fbd" stroke-width="2"/><path d="M7 9h8M7 17h8" stroke="#1a6fbd" stroke-width="1.200"/></svg>
      <svg><path class="w k1" d="M1 2h21v17H1z"/><path d="M3 12l4-7 4 7z" fill="#3f9b4e"/><path d="M12 5h8l-4 7z" fill="#e0393e"/><path d="M4 15.500h15" stroke="#8a8886" stroke-width="1.500"/></svg>
      <svg><path class="w k1" d="M12 21H1V1h21v9"/><path d="M1 1h21v4H1z" fill="#c8c6c4"/><path class="g" d="M5 8h3.500v3.500H5zM5 14h3.500v3.500H5z"/><use href="#funnel" x="11" y="11" width="13" height="13"/></svg>
      <svg><path class="w k1" d="M1 1h21v21H1z"/><path d="M1 1h21v4H1z" fill="#c8c6c4"/><path class="k1" d="M1 5h21M1 10.500h21M1 16h21M8 5v17M15 5v17"/></svg>
      <svg><path class="w" d="M1 1h21v21H1z"/><path d="M1 1h21v4H1z" fill="#c8c6c4"/><path d="M15 5h7v17H1v-6h14z" fill="#83beec"/><path class="k1" d="M1 1h21v21H1zM1 5h21M1 10.500h21M1 16h21M8 5v17M15 5v17"/></svg>
      <svg><text x="4" y="18" font-size="20" font-weight="700" fill="#2088c8" font-family="Open Sans" textLength="12" lengthAdjust="spacingAndGlyphs">R</text></svg>

      <svg><text x="0" y="17" font-size="19" font-weight="700" fill="#2088c8" font-family="Open Sans" textLength="23" lengthAdjust="spacingAndGlyphs">Py</text></svg>
      <svg><path class="k" d="M1 0v22.500h22"/><path d="M2 5h14" stroke="#1a7fc4" stroke-width="1.500"/><circle class="b" cx="18.500" cy="5" r="3"/><path d="M2 11h10M2 16.500h6" stroke="#605e5c" stroke-width="1.500"/><circle class="g" cx="14" cy="11" r="1.800"/><circle class="g" cx="9" cy="16.500" r="1.800"/></svg>
      <svg><path class="k1" d="M8 11h6M14 3h-2.500v17H15"/><path class="b" d="M0 8.500h8v5H0zM14.500 1h8v5.500h-8zM14.500 9h8v5h-8zM14.500 16.500h8V22h-8z"/></svg>
      <svg><path d="M1 2.500h21v13H10l-5 5v-5H1z" fill="#fff" stroke="#1565b0" stroke-width="1.500"/></svg>
      <svg><path class="w k1" d="M4 5V1h10l7 7v14H4v-8M14 1v7h7"/><circle class="b" cx="3" cy="9" r="2.200"/><path d="M6 10h9M10 15h8" stroke="#1a7fc4" stroke-width="1.400"/></svg>
      <svg><path class="w k1" d="M6 2H1c0 8 3 9 6 9M17 2h5c0 8-3 9-6 9M6 2h11v7c0 7-11 7-11 0z"/><path class="b" d="M6 1h11v3H6zM7 19h9v3H7z"/><path class="k1" d="M11.500 14v5"/></svg>

      <svg><path class="w k1" d="M2 23V0h11l7 7v16zM13 0v7h7"/><path d="M5 15h3v6H5zM10 17h3v4h-3zM15 12h3v9h-3z" fill="#323130"/></svg>
      <svg><path class="w k1" d="M2 3h20.500v17H2z"/><text x="13" y="16" text-anchor="middle" font-size="11" fill="#1a7fc4" font-family="Open Sans" textLength="16">123</text><use href="#bolt" x="-1" y="-1" width="12" height="16"/></svg>
      <svg><path d="M12 2h9v8h-9zM1 14h9v8H1z" fill="#fff" stroke="#a19f9d" stroke-width="1.500"/><use href="#bolt" x="-1" y="-1" width="12" height="16"/><use href="#funnel" x="11" y="11" width="13" height="13"/></svg>
      <svg><path class="b" d="M8 1h14v21H1V13z"/><path d="M22 2c-2 4-6 3-6 7s-4 3-4 6 0 4-3 7" fill="none" stroke="#f3f2f1" stroke-width="3"/><path d="M3 0a3.800 3.800 0 0 1 4 4c0 4-3 5-3.500 9C3 9-1 8-1 4a4 4 0 0 1 4-4z" fill="#d86a05"/><circle cx="3.200" cy="4" r="1.300" fill="#fff"/><circle cx="19" cy="20" r="3.200" fill="#d86a05"/><circle cx="22" cy="14" r="1.900" fill="#d86a05"/></svg>
      <svg fill="none" stroke="#8a2da5" stroke-width="1.500"><path d="M7 2h9l7 10-7 9H7L0 12zM7 2l8 10-8 9M16 2L8 12l8 9"/></svg>
      <svg fill="none" stroke="#1a7fd8" stroke-width="1.500"><path d="M1 2h14l8 9.500-8 9.500H1l7-9.500zM5 7l4-5M8 11.500L15 2M1 21L13 5M8 21L18 7M14 21l7-9"/></svg>
    </div>
    <div class="dots">...</div>
    <div class="wells">
      <label>Values</label>
      <div class="well">Add data fields here</div>
      <label class="dt">Drill through</label>
      <div class="sw"><span>Cross-report</span><i class="off"><u></u>Off</i></div>
      <div class="sw two"><span>Keep all filters</span><i>On<u></u></i></div>
      <div class="well low">Add drill-through fields here</div>
    </div>
  </aside>

  <aside class="data">
    <header><h2>Data</h2><svg width="16" height="16"><use href="#dbl"/></svg></header>
    <div class="find"><svg width="18" height="18" viewBox="0 0 18 18" fill="none" stroke="#605e5c" stroke-width="1.300"><circle cx="7.500" cy="7.500" r="6.500"/><path d="M12.500 12.500l5 5"/></svg>Search</div>
    <ul>
      <li><svg class="arr" viewBox="0 0 8 14"><path d="M1 1l6 6-6 6"/></svg><svg class="ti"><use href="#tblcalc"/></svg>_Measure</li>
      <li><svg class="arr" viewBox="0 0 8 14"><path d="M1 1l6 6-6 6"/></svg><svg class="ti"><use href="#tbl"/></svg>Current</li>
      <li><svg class="arr" viewBox="0 0 8 14"><path d="M1 1l6 6-6 6"/></svg><svg class="ti"><use href="#tbl"/></svg>Forecast_Day</li>
      <li><svg class="arr" viewBox="0 0 8 14"><path d="M1 1l6 6-6 6"/></svg><svg class="ti"><use href="#tbl"/></svg>Forecast_Hour</li>
      <li><svg class="arr" viewBox="0 0 8 14"><path d="M1 1l6 6-6 6"/></svg><svg class="ti"><use href="#tblcalc"/></svg>Locations</li>
    </ul>
  </aside>
</main>

<footer class="status">
  <span>Page 1 of 1</span>
  <svg class="zoom" width="153" height="16" viewBox="0 0 153 16" stroke="#484644"><path d="M0 8h6" stroke-width="2"/><path d="M12 8.500h125"/><path d="M60 1.500h5v13h-5z" fill="#484644" stroke="none"/><path d="M74.500 5v7"/><path d="M143 8.500h10M148 3.500v10" stroke-width="1.800"/></svg>
  <span class="pct">83%</span>
  <svg class="fit" width="21" height="16" viewBox="0 0 21 16" fill="none" stroke="#605e5c" stroke-width="1.600"><path d="M1 1h19v14H1z"/><path d="M4 6.500V4h3M14 4h3v2.500M4 9.500V12h3M14 12h3V9.500" stroke-width="1.200"/></svg>
  <span class="update">Update available (click to download)</span>
</footer>
</body>
</html>
```
FILE: styles.css
```css
* { box-sizing: border-box; margin: 0; padding: 0; }
body { width: 1916px; height: 1017px; overflow: hidden; display: flex; flex-direction: column; background: #f3f2f1; color: #252423; font: 14px/20px "Open Sans", "Noto Sans", sans-serif; letter-spacing: -0.02em; white-space: nowrap; }
svg { display: block; flex: none; overflow: visible; }
.sprite { position: absolute; }
i, em { font-style: normal; }

/* Title bar */
.titlebar { height: 43px; flex: none; background: #3b3a37; color: #fff; display: flex; align-items: center; }
.quick { display: flex; gap: 19px; padding-left: 20px; width: 126px; }
.doc-title { width: 400px; margin-top: 5px; letter-spacing: 0.13px; }
.title-caret { margin: 3px 0 0 6px; }
.top-search { width: 500px; height: 30px; margin-left: 324px; margin-top: -1px; background: #d4d4d2; border-radius: 2px; color: #1f5c4e; display: flex; align-items: center; gap: 14px; padding-left: 21px; font-size: 16px; letter-spacing: 0; }
.account { margin-left: 286px; display: flex; align-items: center; gap: 11px; }
.account span { width: 46px; letter-spacing: 0.25px; }
.win { margin: 3px 0 0 41px; }

/* Tabs */
.tabs { height: 45px; flex: none; background: #fafafa; display: flex; align-items: flex-start; padding-left: 28px; font-size: 16.500px; letter-spacing: -0.005em; }
.tabs > span { height: 38px; line-height: 39px; margin-right: 39.500px; }
.tabs > span:first-child { margin-right: 47px; }
.tabs .on { font-weight: 700; letter-spacing: -0.04em; border-bottom: 3px solid #117865; }
.share { margin: 5px 3px 0 auto; width: 105px; height: 30px; border: 0; border-radius: 4px; background: #117865; color: #fff; font: 14px "Open Sans", sans-serif; display: flex; align-items: center; gap: 9px; padding-left: 9px; }
.share span { letter-spacing: 0; margin-right: -3px; }

/* Ribbon */
.ribbon { height: 112px; flex: none; background: #fafafa; display: flex; position: relative; z-index: 2; box-shadow: 0 1px 5px #0003; }
.group { height: 110px; border-right: 1px solid #d2d0ce; display: flex; flex-direction: column; justify-content: space-between; flex: none; }
.clip { width: 201px; padding-left: 7px; }
.clip .cmd > svg { margin-left: 4px; }
.items { display: flex; }
.cmd { display: flex; flex-direction: column; align-items: center; padding-top: 5px; flex: none; }
.cmd > svg { width: 36px; height: 40px; color: #484644; }
.cmd > svg.over { width: 40px; }
.cmd > .get { margin-left: 5px; }
.cmd > .quick-m { margin-right: 8px; }
.cmd b { font-weight: 400; text-align: center; line-height: 20px; margin-top: 4px; letter-spacing: -0.025em; }
.cv { display: inline-block; width: 8px; height: 6px; margin-left: 3px; vertical-align: 1px; }
.dim b, .mini.dim { color: #c2c0be; }
.mini { display: flex; flex-direction: column; padding-left: 2px; }
.mini span { display: flex; align-items: center; gap: 5px; height: 30px; letter-spacing: -0.1px; }
.mini .fp { letter-spacing: 0.03px; }
.mini svg { width: 20px; height: 20px; }
.group em { font-size: 12px; line-height: 12px; text-align: center; padding-right: 7px; color: #3b3a39; letter-spacing: -0.035em; }
.collapse { margin: 96px 1px 0 auto; }

/* Workspace */
.work { flex: 1; display: flex; min-height: 0; }
.rail { width: 51px; border-right: 1px solid #dddbd9; display: flex; flex-direction: column; }
.rail i { height: 50px; display: grid; place-items: center; padding-bottom: 1px; }
.rail .on { border-left: 3px solid #117865; padding-right: 3px; }
.center { width: 1417px; display: flex; flex-direction: column; }
.stage { height: 746px; display: flex; background: #fff; padding-left: 25px; }
.filters { margin-left: 25px; border-left: 1px solid #a6a4a2; width: 41px; padding: 16px 0 0 13px; }
.fi { margin: 19px 0 0 3px; }
.filters span { writing-mode: vertical-rl; font-weight: 600; font-size: 17.500px; line-height: 20px; margin: 9px 0 0 -2px; letter-spacing: 0.2px; display: block; }

/* Report page */
.report { width: 1326px; height: 746px; flex: none; position: relative; overflow: hidden; background: #000; display: flex; padding: 23px 0 0 26px; gap: 26px; color: #fff; box-shadow: 0 0 10px #0003; }
.sheet { position: absolute; inset: -18px 0 3px 0; border-radius: 42px; background:
  radial-gradient(ellipse 450px 400px at 245px 218px, #8a482aff 0, #7c412aff 42%, #553022d0 62%, #33201a80 80%, transparent 100%),
  radial-gradient(ellipse 330px 330px at 1220px 450px, #0b1230 0, #0a1128d0 30%, transparent 100%),
  radial-gradient(ellipse 300px 360px at 0 180px, #3a3432 0, transparent 100%),
  linear-gradient(165deg, #191919 0%, #151515 45%, #070708 75%, #020203 100%); }
.card { position: relative; background: linear-gradient(160deg, #ffffff0d, #ffffff07); border-radius: 20px; }
.card::before { content: ""; position: absolute; inset: 0; border-radius: inherit; padding: 1.200px; background: var(--edge); -webkit-mask: linear-gradient(#000 0 0) content-box exclude, linear-gradient(#000 0 0); mask: linear-gradient(#000 0 0) content-box exclude, linear-gradient(#000 0 0); pointer-events: none; }
.e1, .e2b { --edge: linear-gradient(215deg, #ffffff50, #ffffff0a 35%, #ffffff0a 65%, #ffffff40); }
.e2, .e4 { --edge: linear-gradient(150deg, #ffffff55, #ffffff22 35%, #ffffff0c 60%, #ffffff35); }
.e3 { --edge: linear-gradient(190deg, #ffffff48, #ffffff25 45%, #ffffff0a 80%); }
.e5 { --edge: linear-gradient(150deg, #ffffff60, #ffffff12 40%, #ffffff0a 65%, #ffffff38); border-radius: 30px; }

.left { position: relative; width: 403.500px; }
.now { height: 350px; border-radius: 40px; background: linear-gradient(135deg, #ff9a6c 0%, #fb8552 30%, #f26a2e 60%, #ea5210 88%); box-shadow: inset 0 0 0 1px #ffffff38; padding: 30px 13px 0 13px; }
.place { display: flex; align-items: center; height: 32px; gap: 6px; font-size: 18.500px; letter-spacing: -0.012em; }
.place strong { margin-top: 2px; }
.place .date { margin-left: auto; margin-right: -2px; letter-spacing: 0.022em; }
.moon { margin: 26px 0 0 27px; }
.temp { font-size: 54px; line-height: 60px; font-weight: 700; letter-spacing: 0.003em; margin: -3px 0 0 -1px; }
.cond { font-size: 18.500px; font-weight: 700; line-height: 26px; margin-top: 11.500px; letter-spacing: -0.018em; }
.cities { display: flex; gap: 8.500px; margin: 28px -12px 0 5.500px; align-items: center; font: 600 14.500px "Roboto", sans-serif; letter-spacing: -0.015em; color: #252423; }
.cities span { width: 118px; height: 71px; line-height: 70px; flex: none; border-radius: 27px; padding-left: 13px; background: #ffffff2a; border: 1px solid #c9a99a; }
.cities .sel { background: #2524232e; border-color: #30231d; color: #fff; }
.cities svg { margin-left: -2px; }

.stats { display: grid; grid-template-columns: 189px 189px; grid-auto-rows: 95px; gap: 19.200px 21px; margin-top: 19px; }
.stat { display: flex; flex-direction: column; }
.stat h4 { height: 38px; display: flex; align-items: center; font-size: 16.500px; letter-spacing: -0.025em; }
.stat p { font-size: 28px; line-height: 40px; text-align: center; letter-spacing: -0.05em; margin-top: 2px; }
.mid-row h4 { padding-top: 2px; }
.mid-row p { margin-top: -2px; }
.low-row h4 { padding-top: 5px; }
.low-row p { margin-top: 0; }

.right { position: relative; width: 842px; height: 692px; display: grid; grid-template-columns: 591px 230px; grid-template-rows: 95px 253px 20.500px 323.500px; column-gap: 21px; align-content: start; }
.slots { position: absolute; left: 0; top: 0; }
.days { position: relative; grid-column: 1 / 3; display: flex; gap: 8.200px; padding: 7px 0 0 5.500px; }
.days div { width: 111px; height: 88px; background: #252423; text-align: center; font: 600 15px/20px "Roboto", sans-serif; letter-spacing: 0; display: flex; flex-direction: column; align-items: center; flex: none; }
.days svg { width: 36px; height: 36px; margin: 5px 0 6px; }
.days .nosun { margin-left: -6px; }
.forecast { margin-top: 15px; height: 238px; }
.forecast svg { font-family: "Open Sans", sans-serif; fill: #fff; letter-spacing: 0; }
.din { font-family: "Roboto", sans-serif; font-weight: 600; }
.ytick { font-size: 12.500px; font-weight: 700; }
.lbl { font-size: 12px; text-anchor: middle; }
.sun { margin-top: 15px; height: 238px; }
.aqi { grid-row: 4; }
.chance { grid-row: 4; }
.sun h3 { font-size: 18px; letter-spacing: 0; line-height: 24px; padding: 10px 0 0 29px; }
.row { display: flex; padding: 18px 0 0 12px; height: 83px; }
.row > svg { margin-top: 12px; }
.row.second { margin-top: 11px; height: 83px; }
.row.second > svg { margin-top: 16px; }
.row div { width: 177px; flex: none; display: flex; flex-direction: column; align-items: center; }
.row span { font-size: 20.500px; line-height: 30px; color: #a9a8a8; letter-spacing: -0.01em; }
.row b { font-size: 27.500px; line-height: 40px; font-weight: 400; letter-spacing: -0.035em; margin-top: 3px; }
.row.second b { margin-top: 5px; }

.aqi h3 { font-size: 18.500px; font-weight: 400; line-height: 24px; padding: 10px 0 0 17px; letter-spacing: 0; }
.aqi-body { display: flex; padding-left: 53px; }
.gauge { margin-top: 30px; }
.rule { width: 2.500px; height: 276px; margin: 5px 0 0 70.500px; background: #a6a6a6; }
.metrics { padding-top: 12px; margin-left: 21px; }
.metrics.second { padding-top: 9px; margin-left: 35px; }
.metric { display: grid; grid-template: 38px 30px / 15px 76.500px; text-align: center; }
.metric i { width: 15px; height: 15px; border-radius: 50%; background: #3ed544; margin-top: var(--d); }
.metric .mid { background: #fdf06a; }
.metric .bad { background: #df4c3f; }
.metric b { font-size: 27.500px; line-height: 38px; font-weight: 400; letter-spacing: -0.05em; }
.metric span { grid-column: 2; font-size: 16px; line-height: 30px; color: #5c5b5b; letter-spacing: -0.02em; }

.chance h3 { font: 500 20.500px/24px "Roboto", sans-serif; letter-spacing: 0; padding: 15px 0 0 5.500px; }
.bars { display: grid; grid-template-columns: 61px 131.500px; grid-auto-rows: 25px; gap: 6.350px 9px; margin-top: 25px; font-size: 12px; line-height: 25px; letter-spacing: -0.01em; }
.bars span { text-align: right; }
.bars b { background: #e66c37; font-weight: 400; text-align: center; box-shadow: inset 0 0 0 1px #b9572d; }
.axis { display: grid; grid-template-columns: repeat(3, 66px); padding: 15px 0 0 37px; text-align: center; font-size: 12px; font-weight: 700; letter-spacing: 0; }

.loading { position: absolute; left: 0; top: 0; width: 1326px; height: 746px; }
.toast { position: absolute; left: 560px; top: 253px; width: 648px; height: 113px; border-radius: 8px; background: #ffffff44; color: #1b1b1b; font-size: 17px; letter-spacing: -0.1px; display: flex; align-items: center; gap: 10px; padding: 0 0 14px 49px; }

/* Page tabs */
.pages { height: 44px; display: flex; align-items: flex-start; }
.desk { width: 30px; margin-left: 13px; height: 38px; border-bottom: 3px solid #117865; padding: 9px 0 0 1px; }
.phone { margin: 6px 0 0 31px; }
.nav { margin: 15px 0 0 25px; }
.page { margin-left: 6px; width: 190px; height: 44px; line-height: 45px; text-align: center; background: #fff; border-left: 1px solid #a6a4a2; border-bottom: 5px solid #117865; letter-spacing: 0.2px; }
.add { width: 48px; height: 44px; background: #117865; display: grid; place-items: center; padding-bottom: 3px; }

/* Visualizations pane */
.viz, .data { border-left: 1px solid #d8d6d4; }
.viz { width: 226px; }
.viz header, .data header { display: flex; justify-content: space-between; align-items: center; height: 50px; padding: 0 10px; }
.data header { padding: 0 6px 0 10px; }
.viz h2, .data h2 { font-size: 18.500px; font-weight: 600; letter-spacing: -0.03em; }
.viz header svg, .data header svg { margin-top: -3px; }
.viz h5 { font-size: 14.500px; font-weight: 500; padding: 0 10px; line-height: 16px; letter-spacing: -0.02em; }
.modes { display: flex; gap: 48px; padding: 6px 0 0 10px; align-items: center; }
.modes i { width: 40px; height: 40px; background: #cac8c6; border-radius: 2px; display: grid; place-items: center; }
.split { margin-top: 6px; }
.gallery { display: grid; grid-template-columns: repeat(6, 23px); gap: 12px; padding: 14px 0 0 14px; }
.gallery > svg { width: 23px; height: 23px; }
.k { fill: none; stroke: #3b3a39; stroke-width: 1.600; }
.k1 { stroke: #484644; stroke-width: 1.500; fill: none; }
.w { fill: #fff; stroke: #605e5c; stroke-width: 1.300; }
.w.k1 { fill: #fff; stroke: #484644; stroke-width: 1.500; }
.g { fill: #c8c6c4; stroke: #8a8886; stroke-width: 1.300; }
.b { fill: #83beec; stroke: #1a6fbd; stroke-width: 1.300; }
.bs { fill: none; stroke: #1a7fc4; stroke-width: 1.500; }
.dots { padding-left: 15px; height: 45px; line-height: 26px; font-size: 18px; font-weight: 400; letter-spacing: 3px; margin-top: 1px; }
.wells { border-top: 1px solid #d8d6d4; padding: 11px 7px 0 5px; }
.wells label { display: block; padding-left: 10px; line-height: 20px; }
.well { background: #fff; border: 1px dashed #bdbbb9; height: 35px; line-height: 33px; padding-left: 12px; margin-top: 6px; border-radius: 2px; letter-spacing: 0.15px; }
.wells .dt { margin-top: 14px; color: #484644; font-weight: 600; letter-spacing: -0.1px; }
.sw { display: flex; justify-content: space-between; align-items: center; height: 20px; margin-top: 11px; padding: 0 20px 0 10px; letter-spacing: 0; }
.two { margin-top: 14px; }
.sw i { width: 40px; height: 20px; border-radius: 10px; background: #117865; color: #fff; font-size: 11px; display: flex; align-items: center; justify-content: space-between; padding: 1px 6px 0 6px; }
.sw u { width: 10px; height: 10px; border-radius: 50%; background: currentColor; margin-top: -1px; }
.sw .off { background: #fff; border: 1px solid #797775; color: #605e5c; padding: 0 5px; }
.low { height: 32px; line-height: 31px; padding-left: 10px; margin-top: 13px; letter-spacing: 0.17px; }

/* Data pane */
.data { width: 222px; }
.find { margin: 7px 1px 0 5px; height: 30px; border: 1px solid #d2d0ce; border-bottom-color: #605e5c; border-radius: 4px; background: #fff; display: flex; align-items: center; gap: 8px; padding: 2px 0 0 15px; font-size: 16px; letter-spacing: 0.1px; color: #605e5c; }
.find svg { margin-top: -3px; }
.data ul { list-style: none; padding: 12px 0 0 20px; }
.data li { height: 30px; display: flex; align-items: center; color: #3b3a39; letter-spacing: -0.2px; }
.arr { width: 8px; height: 14px; fill: none; stroke: #484644; stroke-width: 1.200; }
.ti { width: 18px; height: 18px; margin: 0 5px 0 9px; }

/* Status bar */
.status { height: 27px; flex: none; border-top: 1px solid #d8d6d4; display: flex; align-items: center; padding: 6px 2px 0 5px; color: #484644; letter-spacing: 0.15px; }
.zoom { margin: -4px 0 0 auto; }
.pct { margin: -4px 0 0 17px; width: 28px; letter-spacing: -0.5px; }
.fit { margin: -4px 0 0 24px; }
.update { width: 239px; margin-left: 17px; }
```
